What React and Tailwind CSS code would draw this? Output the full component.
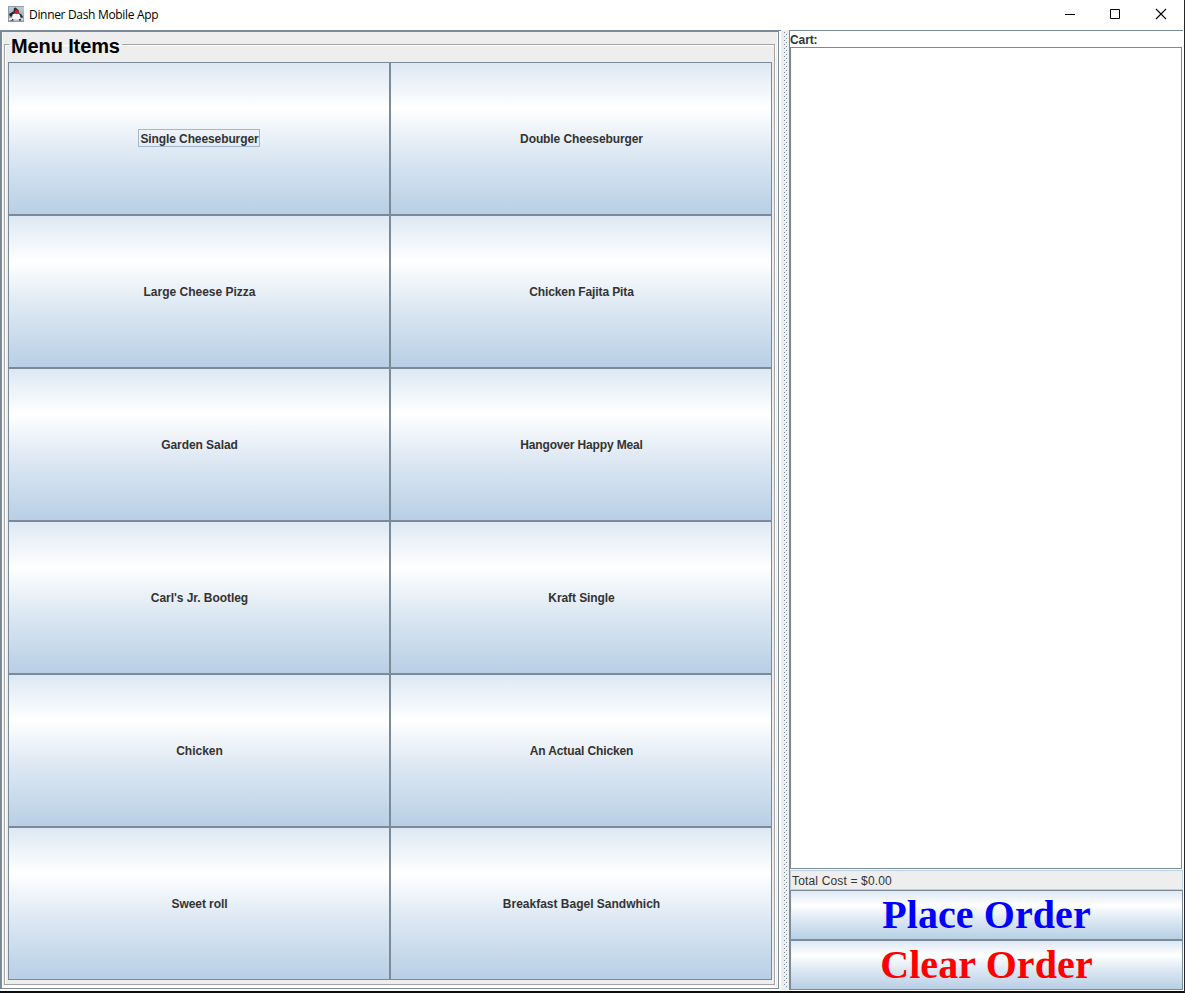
const items = [
  { name: "Single Cheeseburger", tracking: "tracking-[-0.1px]" },
  { name: "Double Cheeseburger", tracking: "tracking-[-0.1px]" },
  { name: "Large Cheese Pizza", tracking: "tracking-normal" },
  { name: "Chicken Fajita Pita", tracking: "tracking-[-0.12px]" },
  { name: "Garden Salad", tracking: "tracking-[-0.06px]" },
  { name: "Hangover Happy Meal", tracking: "tracking-[-0.15px]" },
  { name: "Carl's Jr. Bootleg", tracking: "tracking-[-0.05px]" },
  { name: "Kraft Single", tracking: "tracking-[-0.08px]" },
  { name: "Chicken", tracking: "tracking-normal" },
  { name: "An Actual Chicken", tracking: "tracking-[-0.12px]" },
  { name: "Sweet roll", tracking: "tracking-[-0.08px]" },
  { name: "Breakfast Bagel Sandwhich", tracking: "tracking-normal" },
];

const metal =
  "border border-[#7a8a99] bg-[linear-gradient(to_bottom,#dde8f3_0%,#ffffff_30%,#dde8f3_60%,#b8cfe5_100%)]";

function JavaIcon() {
  return (
    <svg width="16" height="16" viewBox="0 0 16 16">
      <defs>
        <linearGradient id="sky" x1="0" y1="0" x2="0" y2="1">
          <stop offset="0" stopColor="#c3ced8" />
          <stop offset="1" stopColor="#8c9cab" />
        </linearGradient>
      </defs>
      <rect width="16" height="16" fill="url(#sky)" />
      <path d="M0.5 16V0.5H16" fill="none" stroke="#8f9cab" />
      <path d="M6 2L7.5 1.5L10.5 4L11.5 8H5L5.5 5Z" fill="#2a2d31" />
      <path d="M1 8L5 5.5L6 8L4 10.5H2ZM11 7.5L13 8L15 11L14 12L12 10.5Z" fill="#25292d" />
      <path d="M4.5 8.5L7 7.5H10.5L12 9.5L12.5 13.5H4Z" fill="#f6f7f8" />
      <circle cx="8.7" cy="6" r="2" fill="#dc2028" />
      <path d="M3 13H5.5V14.5H3ZM11 13H13.5V14.5H11Z" fill="#34393e" />
      <path d="M1 12H4V14H1ZM5.5 13.5H11V14.5H5.5ZM13 12.5H15V14.5H13Z" fill="#e3e8eb" />
    </svg>
  );
}

function TitleBar() {
  return (
    <header className="flex h-[30px] shrink-0 items-center bg-white pl-2">
      <div className="-mt-[3px]">
        <JavaIcon />
      </div>
      <span className="ml-[5px] font-['Open_Sans',sans-serif] text-[12px] leading-[30px] tracking-[-0.32px] text-black">
        Dinner Dash Mobile App
      </span>
      <svg className="ml-auto" width="119" height="30" viewBox="0 0 119 30" fill="none" stroke="#000">
        <path d="M0 14.5h10" />
        <path d="M45.5 9.5h9v9h-9z" />
        <path d="M91 9l10 10M101 9l-10 10" strokeWidth="1.1" />
      </svg>
    </header>
  );
}

export default function App() {
  return (
    <div className="flex h-[993px] w-[1185px] flex-col overflow-hidden border-r border-b-2 border-r-[#26282b] border-b-[#0b0d10] bg-white font-['Liberation_Sans',Arial,sans-serif]">
      <TitleBar />
      <main className="mr-px mb-px flex min-h-0 flex-1">
        <section className="flex w-[781px] shrink-0 flex-col border-t border-t-[#7a8a99]">
          <div className="mr-0.5 mb-px flex min-h-0 flex-1 border border-l-2 border-[#7a8a99]">
            <div className="flex flex-1 border-r border-b-2 border-l border-white bg-[#eeeeee] pr-0.5 pb-px pl-px">
              <fieldset className="-mt-px flex min-w-0 flex-1 flex-col border border-[#a3a3a3] pt-[5px] pr-[2px] pb-[4px] pl-[3px] shadow-[inset_1px_1px_0_#fff,1px_1px_0_#fff]">
                <legend className="ml-px h-[26px] w-[113px] pl-[2px] text-[20px] leading-[30px] font-bold tracking-[-0.12px] whitespace-nowrap text-black">
                  Menu Items
                </legend>
                <div className="grid min-h-0 flex-1 grid-cols-2 grid-rows-6">
                  {items.map(({ name, tracking }, i) => (
                    <button key={name} className={`${metal} flex items-center justify-center text-[12px] font-bold text-[#333333]`}>
                      <span className={`mb-0.5 border pt-0.5 pl-px leading-[14px] whitespace-nowrap ${tracking} ${i === 0 ? "border-[#a3b8cc]" : "border-transparent"}`}>
                        {name}
                      </span>
                    </button>
                  ))}
                </div>
              </fieldset>
            </div>
          </div>
        </section>
        <div className="w-2 shrink-0 bg-[#eeeeee]">
          <svg width="8" height="960">
            <defs>
              <pattern id="bumps" x="3" y="2" width="4" height="4" patternUnits="userSpaceOnUse">
                <g shapeRendering="crispEdges">
                  <rect x="0" y="0" width="1" height="1" fill="#7a8a99" />
                  <rect x="2" y="2" width="1" height="1" fill="#7a8a99" />
                  <rect x="1" y="1" width="1" height="1" fill="#fff" />
                  <rect x="3" y="3" width="1" height="1" fill="#fff" />
                </g>
              </pattern>
            </defs>
            <rect x="3" y="2" width="4" height="955" fill="url(#bumps)" />
          </svg>
        </div>
        <aside className="flex min-w-0 flex-1 flex-col border-t border-l border-[#7a8a99]">
          <div className="h-4 text-[12px] leading-[18px] font-bold tracking-[-0.1px] text-[#333333]">Cart:</div>
          <div className="mr-px min-h-0 flex-1 border border-[#7a8a99] bg-white" />
          <div className="mt-px h-[20px] border border-[#b8cfe5] bg-[#eeeeee] pl-px text-[12px] leading-[20px] tracking-[0.16px] text-[#333333]">
            Total Cost = $0.00
          </div>
          <button className={`${metal} h-[50px] font-['Liberation_Serif','Times_New_Roman',serif] text-[40px] leading-[48px] font-bold tracking-[0.08px] text-[#0000ff]`}>
            Place Order
          </button>
          <button className={`${metal} h-[50px] font-['Liberation_Serif','Times_New_Roman',serif] text-[40px] leading-[48px] font-bold tracking-[0.12px] text-[#ff0000]`}>
            Clear Order
          </button>
        </aside>
      </main>
    </div>
  );
}
